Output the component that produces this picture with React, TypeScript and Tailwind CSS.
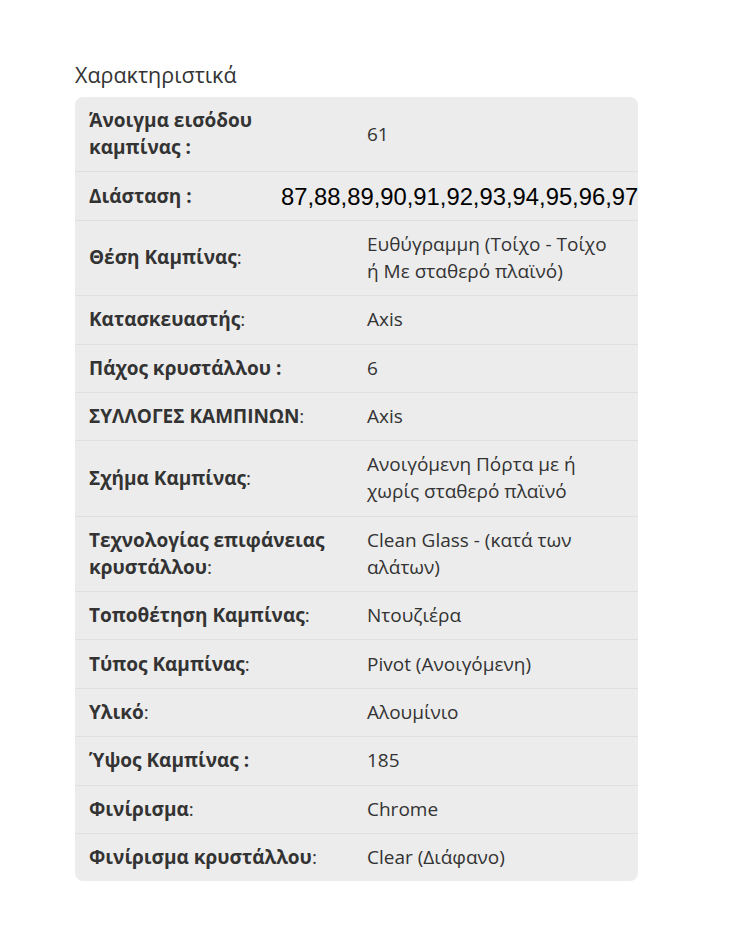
import React from 'react';

type Row = { label: string; colon: string; boldColon?: boolean; value: string };

const ROWS: Row[] = [
  { label: "Άνοιγμα εισόδου καμπίνας", colon: " :", boldColon: true, value: "61" },
  { label: "Διάσταση", colon: " :", boldColon: true, value: "__dims__" },
  { label: "Θέση Καμπίνας", colon: ":", value: "Ευθύγραμμη (Τοίχο - Τοίχο ή Με σταθερό πλαϊνό)" },
  { label: "Κατασκευαστής", colon: ":", value: "Axis" },
  { label: "Πάχος κρυστάλλου", colon: " :", boldColon: true, value: "6" },
  { label: "ΣΥΛΛΟΓΕΣ ΚΑΜΠΙΝΩΝ", colon: ":", value: "Axis" },
  { label: "Σχήμα Καμπίνας", colon: ":", value: "Ανοιγόμενη Πόρτα με ή χωρίς σταθερό πλαϊνό" },
  { label: "Τεχνολογίας επιφάνειας κρυστάλλου", colon: ":", value: "Clean Glass - (κατά των αλάτων)" },
  { label: "Τοποθέτηση Καμπίνας", colon: ":", value: "Ντουζιέρα" },
  { label: "Τύπος Καμπίνας", colon: ":", value: "Pivot (Ανοιγόμενη)" },
  { label: "Υλικό", colon: ":", value: "Αλουμίνιο" },
  { label: "Ύψος Καμπίνας", colon: " :", boldColon: true, value: "185" },
  { label: "Φινίρισμα", colon: ":", value: "Chrome" },
  { label: "Φινίρισμα κρυστάλλου", colon: ":", value: "Clear (Διάφανο)" },
];

export default function App() {
  return (
    <div className="min-h-[939px] bg-white pt-[60px] font-['Open_Sans',sans-serif] text-[#333]">
      <div className="ml-[75px] w-[563px]">
        <h3 className="mb-[8px] text-[21.5px] leading-[29px]">Χαρακτηριστικά</h3>
        <div className="rounded-[8px] bg-[#ececec]">
          {ROWS.map((row, idx) => (
            <div
              key={idx}
              className={`grid grid-cols-[292px_1fr] text-[19px] leading-[27px] ${idx > 0 ? 'border-t border-[#e0e0e0]' : ''}`}
            >
              <div className="flex items-center py-[10.2px] pl-[14px] pr-[28px]">
                <span>
                  <b className="font-bold">{row.label}</b>
                  {row.boldColon ? <b className="font-bold">{row.colon}</b> : row.colon}
                </span>
              </div>
              <div className="flex items-center py-[10.2px] pr-[26px]">
                {row.value === "__dims__" ? (
                  <span className="-ml-[86px] whitespace-nowrap font-['Liberation_Sans',Arial,sans-serif] text-[23.8px] leading-[27px] text-black">
                    87,88,89,90,91,92,93,94,95,96,97
                  </span>
                ) : (
                  <span>{row.value}</span>
                )}
              </div>
            </div>
          ))}
        </div>
      </div>
    </div>
  );
}
